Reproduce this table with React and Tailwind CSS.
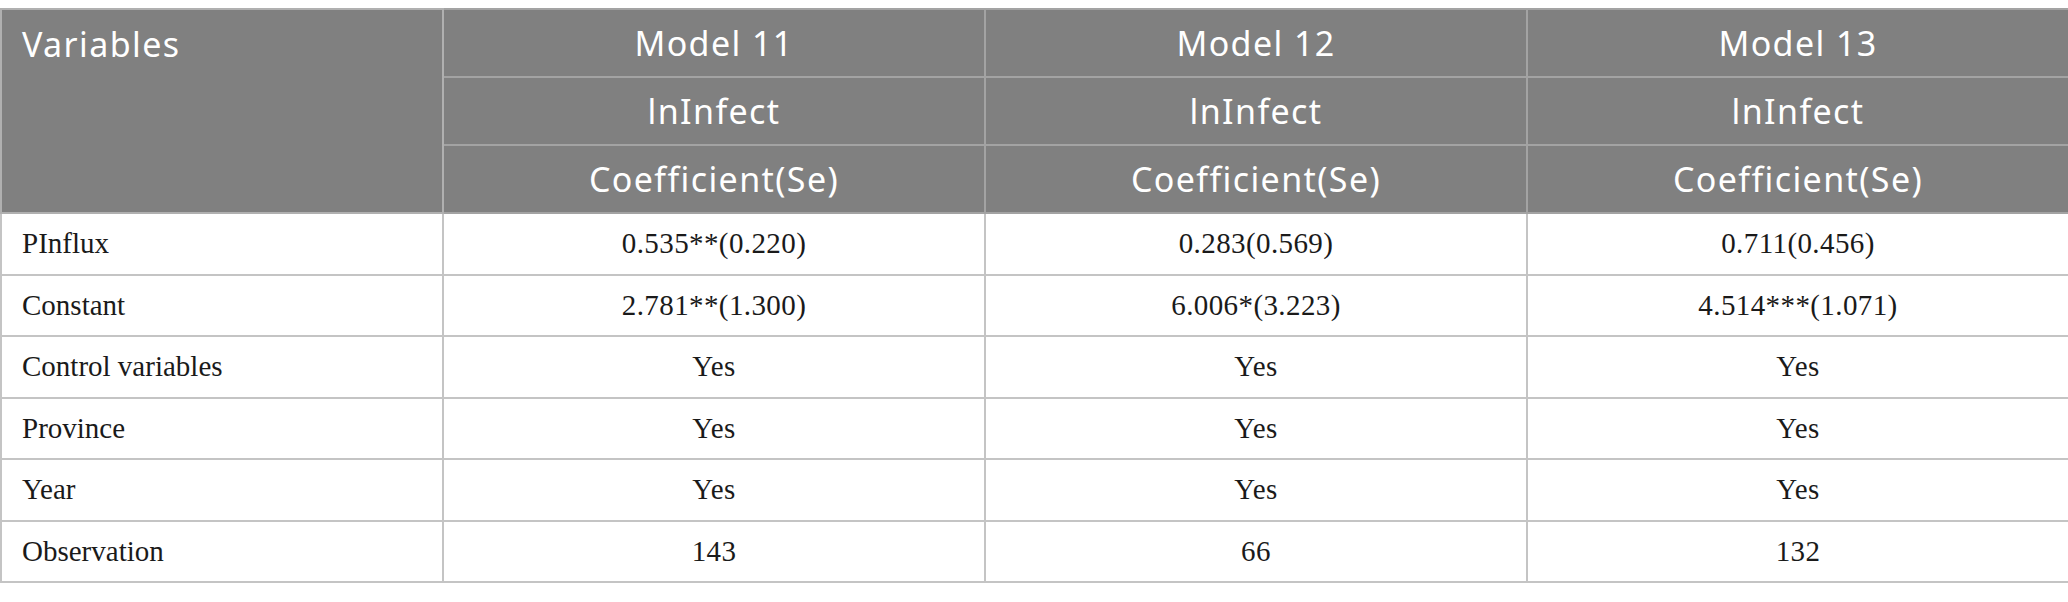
import React from "react";

const rows = [
  ["PInflux", "0.535**(0.220)", "0.283(0.569)", "0.711(0.456)"],
  ["Constant", "2.781**(1.300)", "6.006*(3.223)", "4.514***(1.071)"],
  ["Control variables", "Yes", "Yes", "Yes"],
  ["Province", "Yes", "Yes", "Yes"],
  ["Year", "Yes", "Yes", "Yes"],
  ["Observation", "143", "66", "132"],
];

const models = ["Model 11", "Model 12", "Model 13"];

export default function App() {
  const head = "bg-[#808080] text-white font-normal text-[34px] tracking-[1.4px] h-[68px] p-0 border-2 border-[#a3a3a3] align-middle text-center";
  return (
    <div className="w-[2068px] h-[602px] bg-white pt-[8px]">
      <table className="w-full table-fixed border-collapse" style={{ fontFamily: "'Noto Sans', sans-serif" }}>
        <colgroup>
          <col className="w-[442px]" />
          <col className="w-[542px]" />
          <col className="w-[542px]" />
          <col className="w-[542px]" />
        </colgroup>
        <thead>
          <tr>
            <th rowSpan={3} className="bg-[#808080] text-white font-normal text-[34px] tracking-[1.4px] p-0 pl-[20px] align-top text-left border-2 border-[#b0b0b0]">
              <div className="h-[68px] flex items-center">Variables</div>
            </th>
            {models.map((m) => (
              <th key={m} className={head}>{m}</th>
            ))}
          </tr>
          <tr>
            {models.map((m) => (
              <th key={m} className={head}>lnInfect</th>
            ))}
          </tr>
          <tr>
            {models.map((m) => (
              <th key={m} className={head}>Coefficient(Se)</th>
            ))}
          </tr>
        </thead>
        <tbody style={{ fontFamily: "'Liberation Serif', serif" }}>
          {rows.map((r) => (
            <tr key={r[0]} className="h-[61.5px]">
              {r.map((c, i) => (
                <td
                  key={i}
                  className={
                    "p-0 text-[29px] text-[#1a1a1a] border-2 border-[#c4c4c4] align-middle " +
                    (i === 0 ? "text-left pl-[20px]" : "text-center tracking-[0.4px]")
                  }
                >
                  {c}
                </td>
              ))}
            </tr>
          ))}
        </tbody>
      </table>
    </div>
  );
}
